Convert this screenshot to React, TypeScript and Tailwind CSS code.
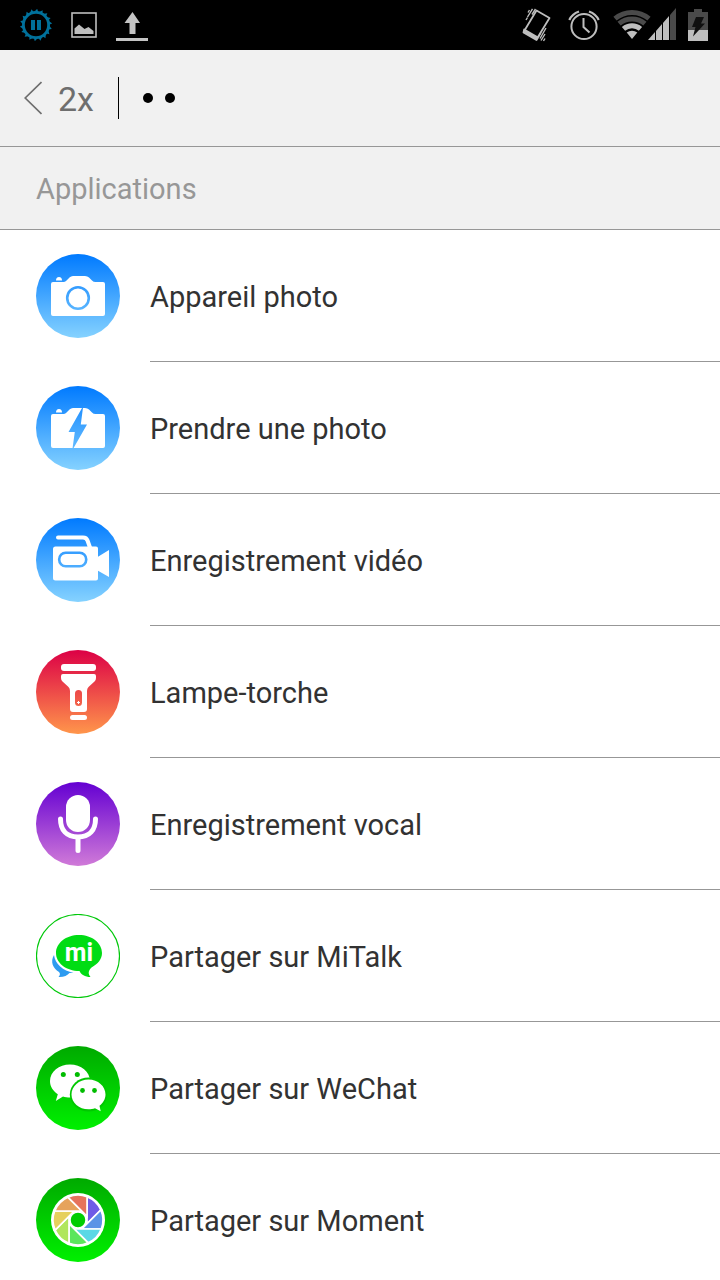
import React from 'react';

const BLADES = ['#6f5ce6', '#5b94e6', '#5ad8e6', '#5be65c', '#b0e65c', '#e6d05c', '#e6a35c', '#e6735c'];

interface BadgeProps {
    id: string;
    from: string;
    to: string;
    children: React.ReactNode;
}

// Round 84px badge with a vertical gradient
const Badge = ({ id, from, to, children }: BadgeProps) => (
    <svg viewBox="0 0 84 84" className="w-[84px] h-[84px] shrink-0" aria-hidden="true">
        <defs>
            <linearGradient id={id} gradientUnits="userSpaceOnUse" x1="0" y1="0" x2="0" y2="84">
                <stop offset="0" stopColor={from} />
                <stop offset="1" stopColor={to} />
            </linearGradient>
        </defs>
        <circle cx="42" cy="42" r="42" fill={`url(#${id})`} />
        {children}
    </svg>
);

const CameraBody = () => (
    <g fill="#fff">
        <path d="M17 28h10.500q1.500 0 2.500-1l3.500-3.500q1.500-1.500 3.500-1.500h12q2.500 0 4 1.500l3 3q1.500 1.500 3.500 1.500H67q2 0 2 2v30q0 2-2 2H17q-2 0-2-2V30q0-2 2-2z" />
        <path d="M20 26.500q0-3.500 3-3.500t3 3.500z" />
    </g>
);

const CameraIcon = () => (
    <Badge id="camera" from="#007aff" to="#85d2ff">
        <CameraBody />
        <circle cx="42" cy="44" r="10.800" fill="none" stroke="url(#camera)" strokeWidth="2.600" />
    </Badge>
);

const FlashIcon = () => (
    <Badge id="flash" from="#007aff" to="#85d2ff">
        <CameraBody />
        <path d="M46.300 21.500 32.500 46h6.300L36.500 62.500h.8L51 38.500h-6.200L47 21.500z" fill="url(#flash)" />
    </Badge>
);

const VideoIcon = () => (
    <Badge id="video" from="#007aff" to="#85d2ff">
        <path d="M22 19.500h25q3.500 0 4.500 3l2.500 7" fill="none" stroke="#fff" strokeWidth="4" strokeLinecap="round" />
        <path d="M19.500 28.500H60q2 0 2 2v8.200L73 32v27l-11-6.300v7.800q0 2-2 2H19.500q-2.500 0-2.500-2.500V31q0-2.500 2.500-2.500z" fill="#fff" />
        <rect x="23.200" y="34.700" width="27" height="13.600" rx="6.500" fill="none" stroke="url(#video)" strokeWidth="2.600" />
    </Badge>
);

const TorchIcon = () => (
    <Badge id="torch" from="#dc0046" to="#ff964b">
        <rect x="25" y="14" width="35" height="7" rx="3" fill="#fff" />
        <path d="M27 24h31q2 0 2 2v2q0 2-1.500 3.500L52.500 37Q51 38.500 51 41v18q0 3-3 3H37q-3 0-3-3V41q0-2.500-1.500-4l-6-5.500Q25 30 25 28v-2q0-2 2-2z" fill="#fff" />
        <rect x="39" y="40" width="7" height="16" rx="3.500" fill="url(#torch)" />
        <path d="M42.500 51v3M41 52.500h3" stroke="#fff" strokeWidth="1" />
        <rect x="34" y="65" width="17" height="5" rx="2.500" fill="#fff" />
    </Badge>
);

const MicIcon = () => (
    <Badge id="mic" from="#6400d2" to="#d07ad8">
        <rect x="30" y="13" width="24" height="37" rx="12" fill="#fff" />
        <path d="M24.500 37c0 11 6 18 17.500 18s17.500-7 17.500-18M42 55v13.500" fill="none" stroke="#fff" strokeWidth="5" strokeLinecap="round" />
    </Badge>
);

const MiTalkIcon = () => (
    <svg viewBox="0 0 84 84" className="w-[84px] h-[84px] shrink-0" aria-hidden="true">
        <circle cx="42" cy="42" r="41.500" fill="#fff" stroke="#00c80a" strokeWidth="1.200" />
        <path d="M18 41c-4 7-1 13 5 17 1.500 1.500 1 3.500-.5 5 5 .3 9-1.500 11-4l4-.3C27 57 19 50 18 41z" fill="#2d9bf0" />
        <path d="M43 21c13 0 23 8 23 18 0 6-4 11-10.500 14.500C52 57 52 60 54.500 63 49 63 45 60.500 43.500 57 30 57 20 49 20 39s10-18 23-18z" fill="#00dc14" />
        <text x="43" y="47" textAnchor="middle" className="font-[Roboto,sans-serif] text-[25px] font-bold" fill="#fff">mi</text>
    </svg>
);

const WeChatIcon = () => (
    <Badge id="wechat" from="#00aa00" to="#00f000">
        <path d="M34 18.500c11 0 20 7.300 20 16.500s-9 16.500-20 16.500c-2.500 0-5-.3-7-1L19.800 55l2-6.800C17 45 14 40.500 14 35c0-9.200 9-16.500 20-16.500z" fill="#fff" />
        <ellipse cx="52.500" cy="48.500" rx="18.700" ry="17" fill="#00c800" />
        <path d="M52.500 33.500c9.500 0 17 6.700 17 15 0 4.700-2.500 8.500-6 11.200l1.200 5.500-5.700-3c-2 .8-4.200 1.100-6.500 1.100-9.500 0-17-6.600-17-14.800s7.500-15 17-15z" fill="#fff" />
        <g fill="#00bc00">
            <circle cx="27.300" cy="28.500" r="2.500" />
            <circle cx="41.300" cy="28.500" r="2.500" />
            <circle cx="46.500" cy="44.500" r="2.400" />
            <circle cx="58.500" cy="44.500" r="2.400" />
        </g>
    </Badge>
);

const MomentIcon = () => (
    <Badge id="moment" from="#00aa00" to="#00f000">
        <g transform="translate(42 42)">
            <circle r="27" fill="#fff" />
            {BLADES.map((color, i) => (
                <path
                    key={color}
                    d="M9 0V-23.300A25 25 0 0 1 22.900-10.100L9 3.800z"
                    fill={color}
                    stroke="#fff"
                    strokeWidth="1.700"
                    transform={`rotate(${i * 45})`}
                />
            ))}
            <circle r="8" fill="#00cd00" stroke="#fff" strokeWidth="1.500" />
        </g>
    </Badge>
);

const APPS = [
    { label: 'Appareil photo', Icon: CameraIcon },
    { label: 'Prendre une photo', Icon: FlashIcon },
    { label: 'Enregistrement vidéo', Icon: VideoIcon },
    { label: 'Lampe-torche', Icon: TorchIcon },
    { label: 'Enregistrement vocal', Icon: MicIcon },
    { label: 'Partager sur MiTalk', Icon: MiTalkIcon },
    { label: 'Partager sur WeChat', Icon: WeChatIcon },
    { label: 'Partager sur Moment', Icon: MomentIcon },
];

const StatusBar = () => (
    <div className="flex items-center justify-between h-[50px] pl-5 pr-3 bg-black shrink-0">
        {/* Left: notifications */}
        <div className="flex items-center gap-[19px]">
            <svg viewBox="0 0 32 32" className="w-8 h-8" fill="none" stroke="#00719b">
                <circle cx="16" cy="16" r="12.600" strokeWidth="2.800" />
                {Array.from({ length: 18 }, (_, i) => (
                    <path key={i} d="M13.600 3.500 17.200-.2 18.300 3.500z" fill="#00719b" stroke="none" transform={`rotate(${i * 20} 16 16)`} />
                ))}
                <path d="M13 11v10M19 11v10" strokeWidth="4" />
            </svg>
            <svg viewBox="0 0 26 26" className="w-[26px] h-[26px]">
                <rect x="1" y="1" width="24" height="24" fill="none" stroke="#bebebe" strokeWidth="1.600" />
                <path d="M3.500 22v-5.500L8 12.500l5.500 4.500 4-2 5 4v3z" fill="#bebebe" />
            </svg>
            <svg viewBox="0 0 32 32" className="w-8 h-8" fill="#c4c4c4">
                <path d="M16.500 3 24 14h-4.500v11h-6V14H8.500zM0 29h32v3H0z" />
            </svg>
        </div>

        {/* Right: system state */}
        <div className="flex items-center gap-3">
            <svg viewBox="0 0 36 34" className="w-9 h-[34px]" fill="none" stroke="#bebebe">
                <path d="M16.500 2.500 29.500 10 17 30.500 4.200 23z" strokeWidth="1.800" strokeLinejoin="round" />
                <path d="M4.200 21.500 18 29.500l-1.500 2.500L3.500 24.500z" fill="#bebebe" strokeWidth="1.800" strokeLinejoin="round" />
                <path d="M15.500 1 12 6.500M12.500.8 7.500 9M9.500 2 8 4.500M7.500 9.500 6 12M26 20l-6 10.500M25 26l-4 6.500M21 24.500 18.500 29M25 30.500 23.500 33" strokeWidth="1.400" />
            </svg>
            <svg viewBox="0 0 32 34" className="w-8 h-[34px]" fill="none" stroke="#bebebe">
                <circle cx="16" cy="18.500" r="12.600" strokeWidth="2" />
                <path d="M15.500 10v9l6 5.500" strokeWidth="2" />
                <path d="M1.300 12Q4 6 11 3.500M30.700 12Q28 6 21 3.500" strokeWidth="2.200" />
            </svg>
            <svg viewBox="0 0 64 34" className="w-16 h-[34px]">
                <g fill="none" strokeWidth="5">
                    <path d="M3 10.700A26.500 26.500 0 0 1 37 10.700" stroke="#4a4a4a" />
                    <path d="M7.100 15.700A20 20 0 0 1 32.900 15.700" stroke="#4a4a4a" />
                    <path d="M11.500 20.900A13.200 13.200 0 0 1 28.500 20.900" stroke="#bebebe" />
                </g>
                <path d="M14.700 24.600A8.300 8.300 0 0 1 25.300 24.600L20 31z" fill="#bebebe" />
                <g fill="#bebebe">
                    <path d="M36 32l7-8v8zM44 32v-9.100L50 16v16zM51 32V14.900L57 8v24z" />
                    <path d="M58 32V6.900L64 0v32z" fill="#4a4a4a" />
                </g>
            </svg>
            <svg viewBox="0 0 20 34" className="w-5 h-[34px]">
                <path d="M6 1h8v3h6v19H0V4h6z" fill="#4a4a4a" />
                <path d="M0 22h20v11H0z" fill="#bebebe" />
                <path d="M8 9h8l-3 6.500h4L5 28.500 7.500 19H4z" fill="#101010" />
            </svg>
        </div>
    </div>
);

export default function App() {
    return (
        <main className="flex flex-col h-screen overflow-hidden bg-white font-[Roboto,sans-serif]">
            <StatusBar />

            {/* Gesture header */}
            <header className="flex items-center h-[97px] pl-6 shrink-0 bg-[#f1f1f1] border-b border-[#979797]">
                <button type="button" className="flex items-center gap-4 text-[34px] leading-[42px] text-[#6e6e6e]">
                    <svg viewBox="0 0 18 34" className="w-[18px] h-[34px]" fill="none" stroke="#6e6e6e" strokeWidth="1.700">
                        <path d="M17.500 1 1.200 17l16.300 16" />
                    </svg>
                    <span className="pt-0.5">2x</span>
                </button>
                <span className="w-px h-[42px] mx-6 bg-black" />
                <span className="flex gap-3">
                    <span className="w-[10px] h-[10px] rounded-full bg-black" />
                    <span className="w-[10px] h-[10px] rounded-full bg-black" />
                </span>
            </header>

            <h2 className="flex items-center h-[83px] px-9 pt-0.5 shrink-0 bg-[#f1f1f1] border-b border-[#979797] text-[29px] leading-9 text-[#979797]">
                Applications
            </h2>

            <ul>
                {APPS.map(({ label, Icon }) => (
                    <li key={label}>
                        <button type="button" className="flex items-center w-full h-[132px] gap-[30px] pl-9 text-left">
                            <Icon />
                            <span className="flex flex-1 items-center h-full pt-0.5 border-b border-[#979797] text-[29px] leading-9 text-[#323232]">
                                {label}
                            </span>
                        </button>
                    </li>
                ))}
            </ul>
        </main>
    );
}
